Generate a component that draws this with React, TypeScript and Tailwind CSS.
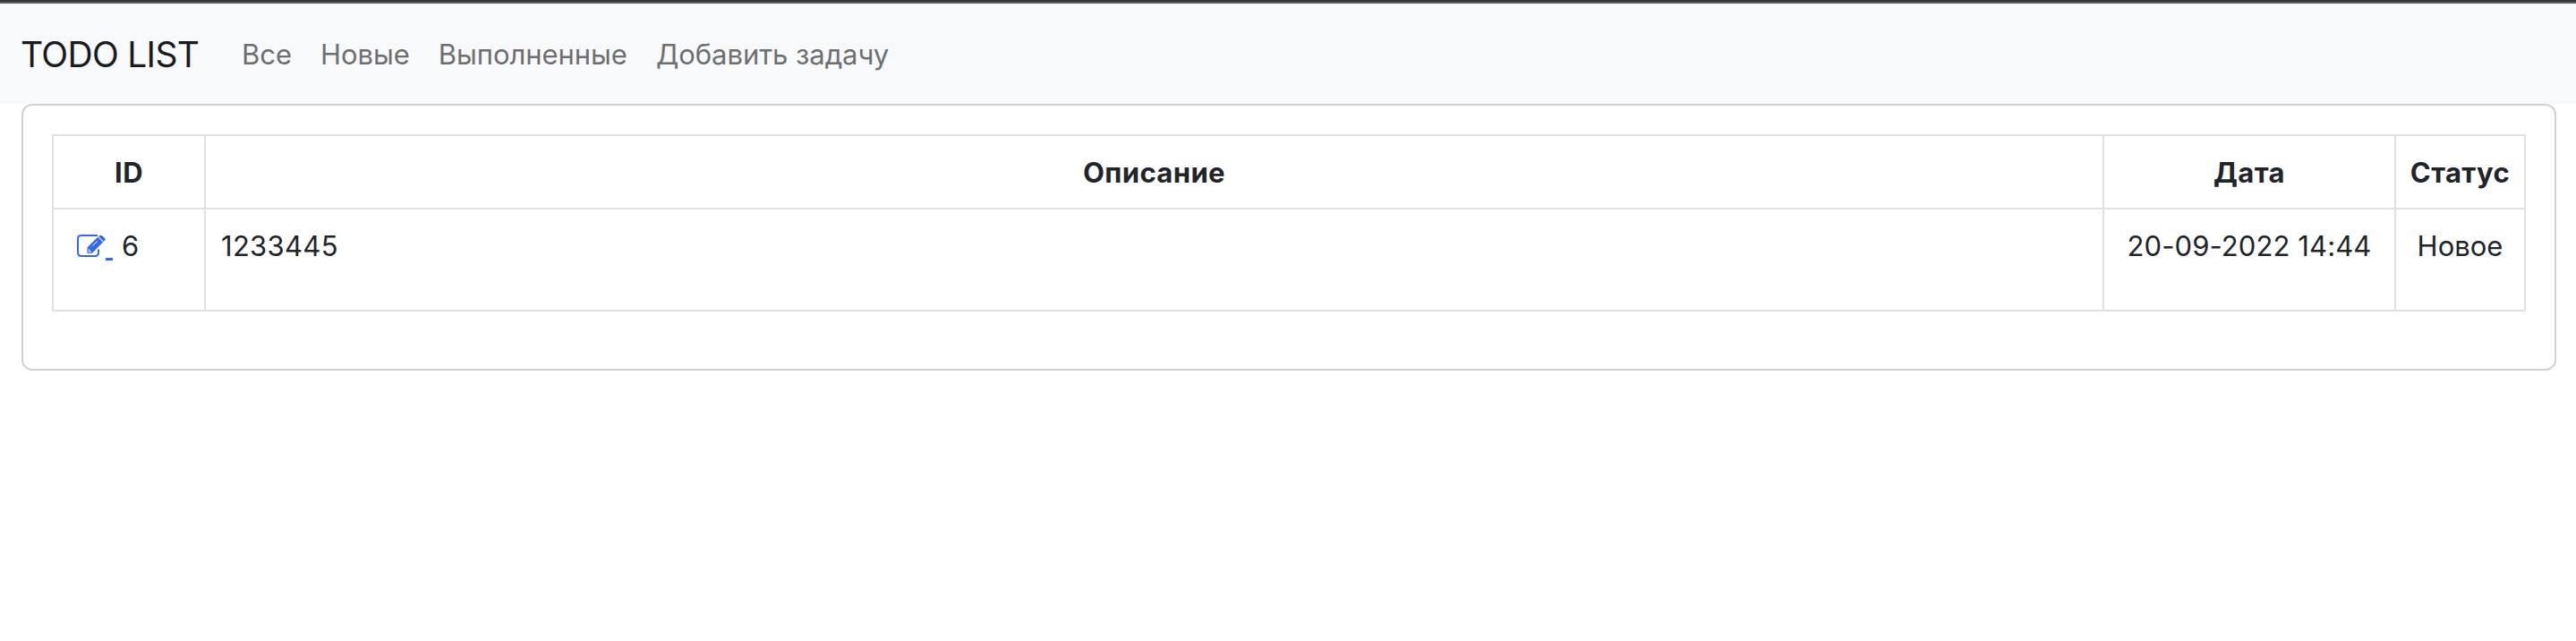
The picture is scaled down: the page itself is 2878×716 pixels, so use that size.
import React from "react";

const links = ["Все", "Новые", "Выполненные", "Добавить задачу"];

function EditIcon() {
  return (
    <svg className="block h-[26px] w-8" viewBox="0 0 32 26" fill="none">
      <path d="M23 1H5Q1 1 1 5v15q0 4 4 4h15q4 0 4-4v-3.500" stroke="#3369f0" strokeWidth="2" />
      <path d="M11.500 20.700v-6.500L23.300 2.800l5.700 5.700-12 12.200z" fill="#3369f0" />
      <path d="M24.800 1.700q1.600-1.800 3.400-.2l2.600 2.300q1.600 1.600 0 3l-1.200 1.200-5.800-5.300z" fill="#3369f0" />
      <path d="m24 2.500 5.200 5.200" stroke="#fff" strokeWidth="1" />
      <path d="m17.500 12.500 5.500-5.300" stroke="#fff" strokeWidth="1" />
      <path d="M13.500 16.300v2.700h2.600" stroke="#fff" strokeWidth="1.200" />
    </svg>
  );
}

export default function App() {
  return (
    <div className="min-h-[716px] bg-white font-['Inter',sans-serif] text-[31px] leading-[48px] font-normal text-[#212529]">
      <div className="h-0.5 bg-[#343539]" />
      <div className="h-0.5 bg-[#5c5d60]" />
      <nav className="flex h-28 items-center bg-[#f8f9fb] pl-[23px]">
        <a className="mr-[33px] w-[198px] pt-0.5 whitespace-nowrap text-[39px] leading-[60px] tracking-[-0.7px] text-[#1a1b1c]">TODO LIST</a>
        <ul className="flex pt-0.5 tracking-[-0.05px]">
          {links.map((l) => (
            <li key={l} className="px-4 text-[#6e6f70]">{l}</li>
          ))}
        </ul>
      </nav>
      <main className="mr-[22px] ml-6 h-[298px] rounded-xl border-2 border-[#d0d1d2] p-8">
        <table className="w-full table-fixed border-collapse">
          <colgroup>
            <col className="w-[170px]" />
            <col />
            <col className="w-[326px]" />
            <col className="w-[145px]" />
          </colgroup>
          <thead>
            <tr className="h-[82px]">
              {["ID", "Описание", "Дата", "Статус"].map((h) => (
                <th key={h} className="border-2 border-[#dee2e6] p-0 pt-0.5 font-bold tracking-[0.4px]">{h}</th>
              ))}
            </tr>
          </thead>
          <tbody>
            <tr className="h-[114px] align-top">
              <td className="border-2 border-[#dee2e6] p-0 pt-[17px] pl-[26px]">
                <div className="flex">
                  <a className="flex pt-[11px]">
                    <EditIcon />
                    <span className="mt-[26px] h-[3px] w-2 bg-[#3369f0]" />
                  </a>
                  <span className="ml-[10px]">6</span>
                </div>
              </td>
              <td className="border-2 border-[#dee2e6] p-0 pt-[17px] pl-[17px] tracking-[0.3px]">1233445</td>
              <td className="border-2 border-[#dee2e6] p-0 pt-[17px] text-center tracking-[0.1px]">20-09-2022 14:44</td>
              <td className="border-2 border-[#dee2e6] p-0 pt-[17px] text-center">Новое</td>
            </tr>
          </tbody>
        </table>
      </main>
    </div>
  );
}
